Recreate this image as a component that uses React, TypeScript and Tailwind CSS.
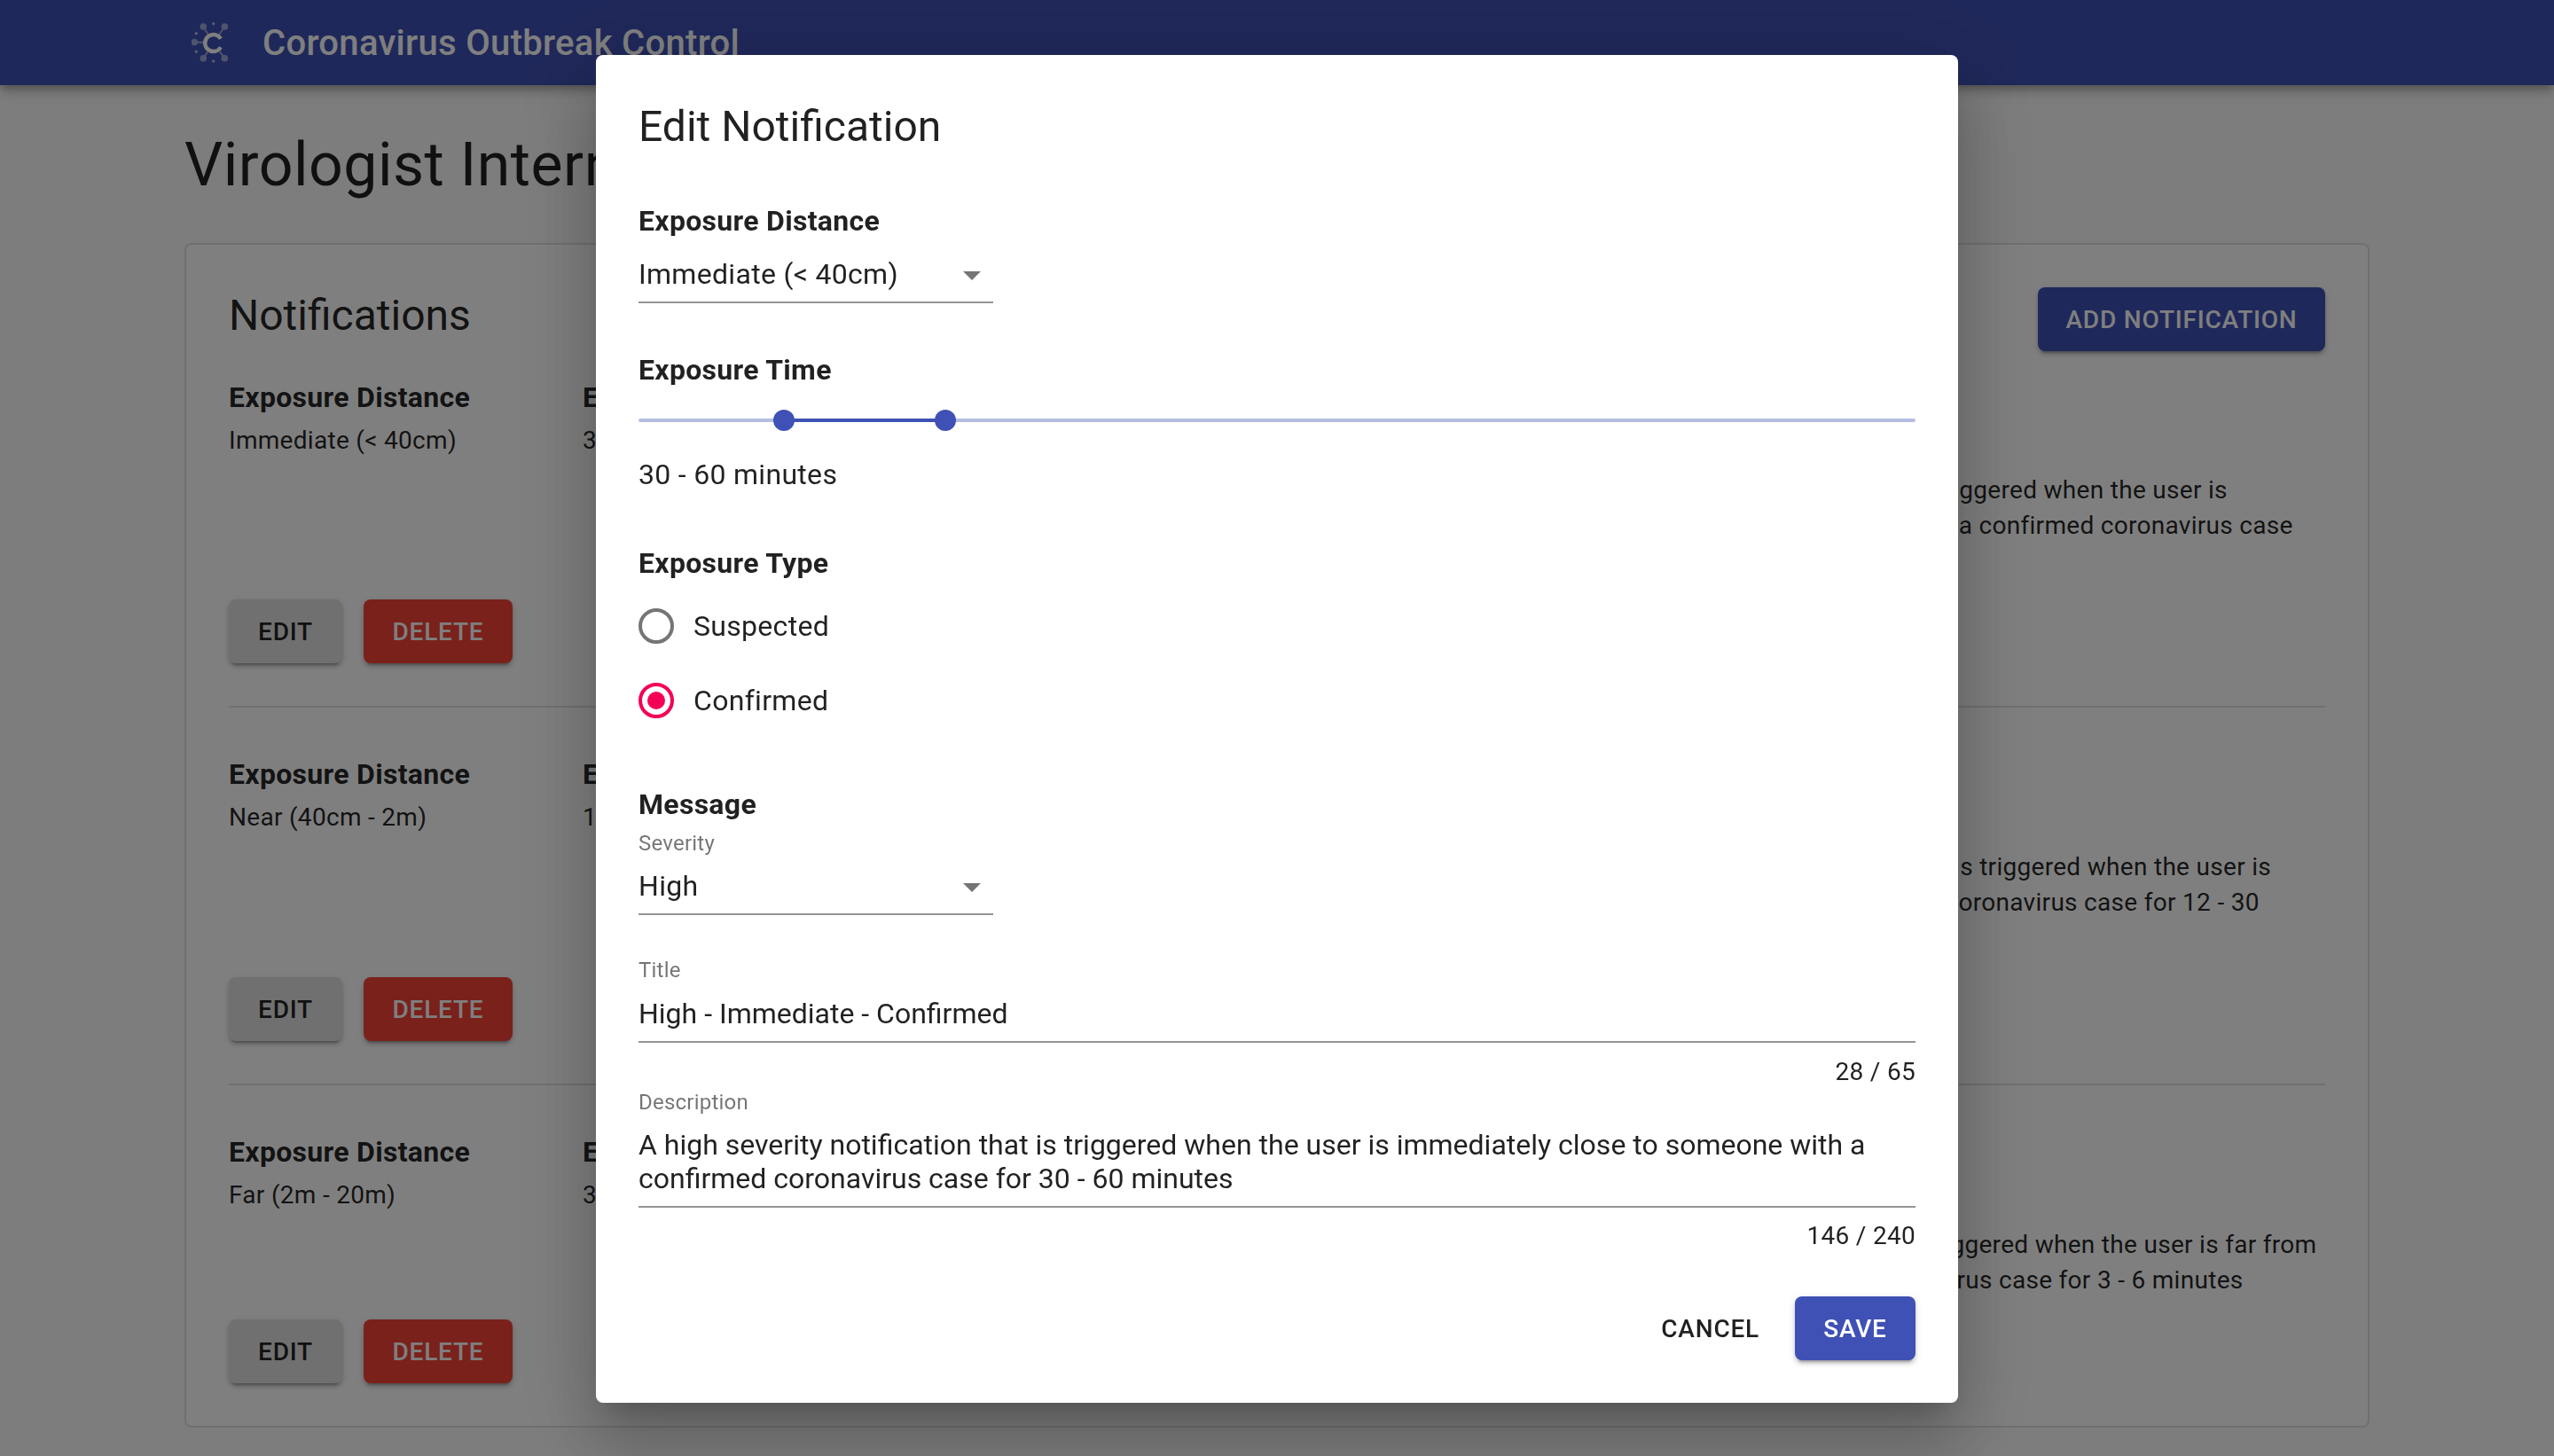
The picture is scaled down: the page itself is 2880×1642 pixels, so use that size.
const notifications = [
  {
    distance: 'Immediate (< 40cm)',
    time: '30 - 60 minutes',
    type: 'Confirmed',
    severity: 'High',
    title: 'High - Immediate - Confirmed',
    description:
      'A high severity notification that is triggered when the user is immediately close to someone with a confirmed coronavirus case for 30 - 60 minutes',
    rowClass: 'pt-[28px] pb-[48px]',
    buttonsClass: 'mt-[23px]',
  },
  {
    distance: 'Near (40cm - 2m)',
    time: '12 - 30 minutes',
    type: 'Confirmed',
    severity: 'Medium',
    title: 'Medium - Near - Confirmed',
    description:
      'A medium severity notification that is triggered when the user is near to someone with a confirmed coronavirus case for 12 - 30 minutes',
    rowClass: 'pt-[51px] pb-[48px] border-t-2 border-black/12',
    buttonsClass: 'mt-[24px]',
  },
  {
    distance: 'Far (2m - 20m)',
    time: '3 - 6 minutes',
    type: 'Confirmed',
    severity: 'Low',
    title: 'Low - Far - Confirmed',
    description:
      'A low severity notification that is triggered when the user is far from someone with a confirmed coronavirus case for 3 - 6 minutes',
    rowClass: 'pt-[51px] border-t-2 border-black/12',
    buttonsClass: 'mt-[24px]',
  },
]

const raisedShadow =
  'shadow-[0_6px_2px_-4px_rgba(0,0,0,0.2),0_4px_4px_0_rgba(0,0,0,0.14),0_2px_10px_0_rgba(0,0,0,0.12)]'

function Logo() {
  const satellites = [
    [13.3, 6],
    [37.3, 6],
    [3.3, 23.5],
    [13.3, 41.7],
    [37.3, 41.7],
  ]
  const dots = [
    [24.7, 2.7],
    [5.3, 13.7],
    [5.3, 34.3],
    [24.7, 45],
  ]
  return (
    <svg width="48" height="48" viewBox="0 0 48 48" className="shrink-0">
      {satellites.map(([x, y]) => (
        <g key={`${x}-${y}`} opacity="0.5">
          <line x1={x} y1={y} x2="24.7" y2="24.5" stroke="white" strokeWidth="2" />
          <circle cx={x} cy={y} r="3.8" fill="white" />
        </g>
      ))}
      {dots.map(([x, y]) => (
        <circle key={`${x}-${y}`} cx={x} cy={y} r="1.7" fill="white" opacity="0.6" />
      ))}
      <circle cx="24.7" cy="24.5" r="11.5" fill="#3f51b5" />
      <path
        d="M32.9 19.75 A9.5 9.5 0 1 0 32.9 29.25"
        fill="none"
        stroke="white"
        strokeWidth="4.4"
      />
    </svg>
  )
}

function Caption({ label, value }: { label: string; value: string }) {
  return (
    <div>
      <div className="text-[32px] leading-[48px] font-bold tracking-[0.00938em]">{label}</div>
      <div className="mt-[5px] text-[28px] leading-[40px] tracking-[0.01071em]">{value}</div>
    </div>
  )
}

function ActionButton({ label, className }: { label: string; className: string }) {
  return (
    <button
      className={`h-[72px] pt-[2px] rounded-lg text-[28px] font-medium tracking-[0.02857em] ${raisedShadow} ${className}`}
    >
      {label}
    </button>
  )
}

function Select({ value }: { value: string }) {
  return (
    <div className="w-[400px] border-b-2 border-black/42 pb-[12px] flex items-center justify-between">
      <span className="text-[32px] leading-[38px] tracking-[0.00938em]">{value}</span>
      <svg width="20" height="10" viewBox="0 0 20 10" className="mr-[14px] mt-[4px]">
        <path d="M0 0h20L10 10z" fill="#757575" />
      </svg>
    </div>
  )
}

function Radio({ label, checked }: { label: string; checked?: boolean }) {
  return (
    <div className="h-[84px] flex items-center gap-[22px]">
      <span
        className={`w-[40px] h-[40px] rounded-full border-[4px] flex items-center justify-center ${
          checked ? 'border-[#f50057]' : 'border-[#757575]'
        }`}
      >
        {checked && <span className="w-[20px] h-[20px] rounded-full bg-[#f50057]" />}
      </span>
      <span className="text-[32px] leading-[48px] tracking-[0.00938em]">{label}</span>
    </div>
  )
}

function SectionLabel({ children, className }: { children: string; className: string }) {
  return (
    <div className={`text-[32px] leading-[48px] font-bold tracking-[0.00938em] ${className}`}>
      {children}
    </div>
  )
}

function EditDialog() {
  return (
    <div className="w-[1536px] h-[1520px] mt-[62px] bg-white rounded-lg px-[48px] pt-[49px] text-black/87 shadow-[0_22px_30px_-14px_rgba(0,0,0,0.2),0_48px_76px_6px_rgba(0,0,0,0.14),0_18px_92px_16px_rgba(0,0,0,0.12)]">
      <h2 className="text-[48px] leading-[64px]">Edit Notification</h2>

      <SectionLabel className="mt-[50px]">Exposure Distance</SectionLabel>
      <div className="mt-[17px]">
        <Select value="Immediate (< 40cm)" />
      </div>

      <SectionLabel className="mt-[51px]">Exposure Time</SectionLabel>
      <div className="relative h-[4px] mt-[31px] rounded-full bg-[#3f51b5]/38">
        <div
          className="absolute h-[4px] bg-[#3f51b5]"
          style={{ left: '11.39%', width: '12.64%' }}
        />
        <div
          className="absolute top-[-10px] -ml-[12px] w-[24px] h-[24px] rounded-full bg-[#3f51b5]"
          style={{ left: '11.39%' }}
        />
        <div
          className="absolute top-[-10px] -ml-[12px] w-[24px] h-[24px] rounded-full bg-[#3f51b5]"
          style={{ left: '24.03%' }}
        />
      </div>
      <div className="mt-[35px] text-[32px] leading-[48px] tracking-[0.00938em]">30 - 60 minutes</div>

      <SectionLabel className="mt-[52px]">Exposure Type</SectionLabel>
      <div className="mt-[5px]">
        <Radio label="Suspected" />
        <Radio label="Confirmed" checked />
      </div>

      <SectionLabel className="mt-[51px]">Message</SectionLabel>
      <div className="mt-[8px] text-[24px] leading-[24px] text-black/54 tracking-[0.00938em]">Severity</div>
      <div className="mt-[17px]">
        <Select value="High" />
      </div>

      <div className="mt-[50px] text-[24px] leading-[24px] text-black/54 tracking-[0.00938em]">Title</div>
      <div className="mt-[18px] border-b-2 border-black/42 pb-[12px] text-[32px] leading-[38px]">
        High - Immediate - Confirmed
      </div>
      <div className="mt-[13px] text-right text-[28px] leading-[40px] tracking-[0.01071em]">28 / 65</div>

      <div className="mt-[2px] text-[24px] leading-[24px] text-black/54 tracking-[0.00938em]">Description</div>
      <div className="mt-[17px] border-b-2 border-black/42 pb-[12px] text-[32px] leading-[38px]">
        A high severity notification that is triggered when the user is immediately close to someone
        with a confirmed coronavirus case for 30 - 60 minutes
      </div>
      <div className="mt-[12px] text-right text-[28px] leading-[40px] tracking-[0.01071em]">146 / 240</div>

      <div className="mt-[48px] flex justify-end items-center gap-[24px]">
        <button className="h-[72px] pt-[1px] px-[16px] text-[28px] font-medium tracking-[0.02857em]">CANCEL</button>
        <button
          className={`h-[72px] w-[136px] pt-[1px] rounded-lg bg-[#3f51b5] text-white text-[28px] font-medium tracking-[0.02857em] ${raisedShadow}`}
        >
          SAVE
        </button>
      </div>
    </div>
  )
}

export default function App() {
  return (
    <div className="relative h-[1642px] overflow-hidden bg-[#fafafa] text-black/87 font-['Roboto',sans-serif]">
      <header className="h-[96px] flex items-center pl-[216px] gap-[32px] bg-[#3f51b5] text-white shadow-[0_4px_8px_-2px_rgba(0,0,0,0.2),0_8px_10px_0_rgba(0,0,0,0.14),0_2px_20px_0_rgba(0,0,0,0.12)]">
        <Logo />
        <span className="pt-[2px] text-[40px] font-medium tracking-[0.0075em]">Coronavirus Outbreak Control</span>
      </header>

      <main className="px-[208px] pt-[48px]">
        <h1 className="text-[68px] leading-[84px] tracking-[0.00735em]">Virologist Internal</h1>

        <section className="mt-[46px] h-[1336px] bg-white border-2 border-black/12 rounded-lg px-[48px] pt-[48px]">
          <div className="flex justify-between items-start h-[72px]">
            <h3 className="text-[48px] leading-[64px]">Notifications</h3>
            <ActionButton label="ADD NOTIFICATION" className="w-[324px] bg-[#3f51b5] text-white" />
          </div>

          {notifications.map((n) => (
            <div key={n.distance} className={n.rowClass}>
              <div className="grid grid-cols-[399px_400px_694px_1fr]">
                <Caption label="Exposure Distance" value={n.distance} />
                <Caption label="Exposure Time" value={n.time} />
                <Caption label="Exposure Type" value={n.type} />
                <div>
                  <Caption label="Message" value={n.title} />
                  <p className="mt-[16px] text-[28px] leading-[40px] tracking-[0.01071em]">{n.description}</p>
                </div>
              </div>
              <div className={`flex gap-[24px] ${n.buttonsClass}`}>
                <ActionButton label="EDIT" className="w-[128px] bg-[#e0e0e0]" />
                <ActionButton label="DELETE" className="w-[168px] bg-[#f44336] text-white" />
              </div>
            </div>
          ))}
        </section>
      </main>

      <div className="fixed inset-0 flex justify-center items-start bg-black/50">
        <EditDialog />
      </div>
    </div>
  )
}
